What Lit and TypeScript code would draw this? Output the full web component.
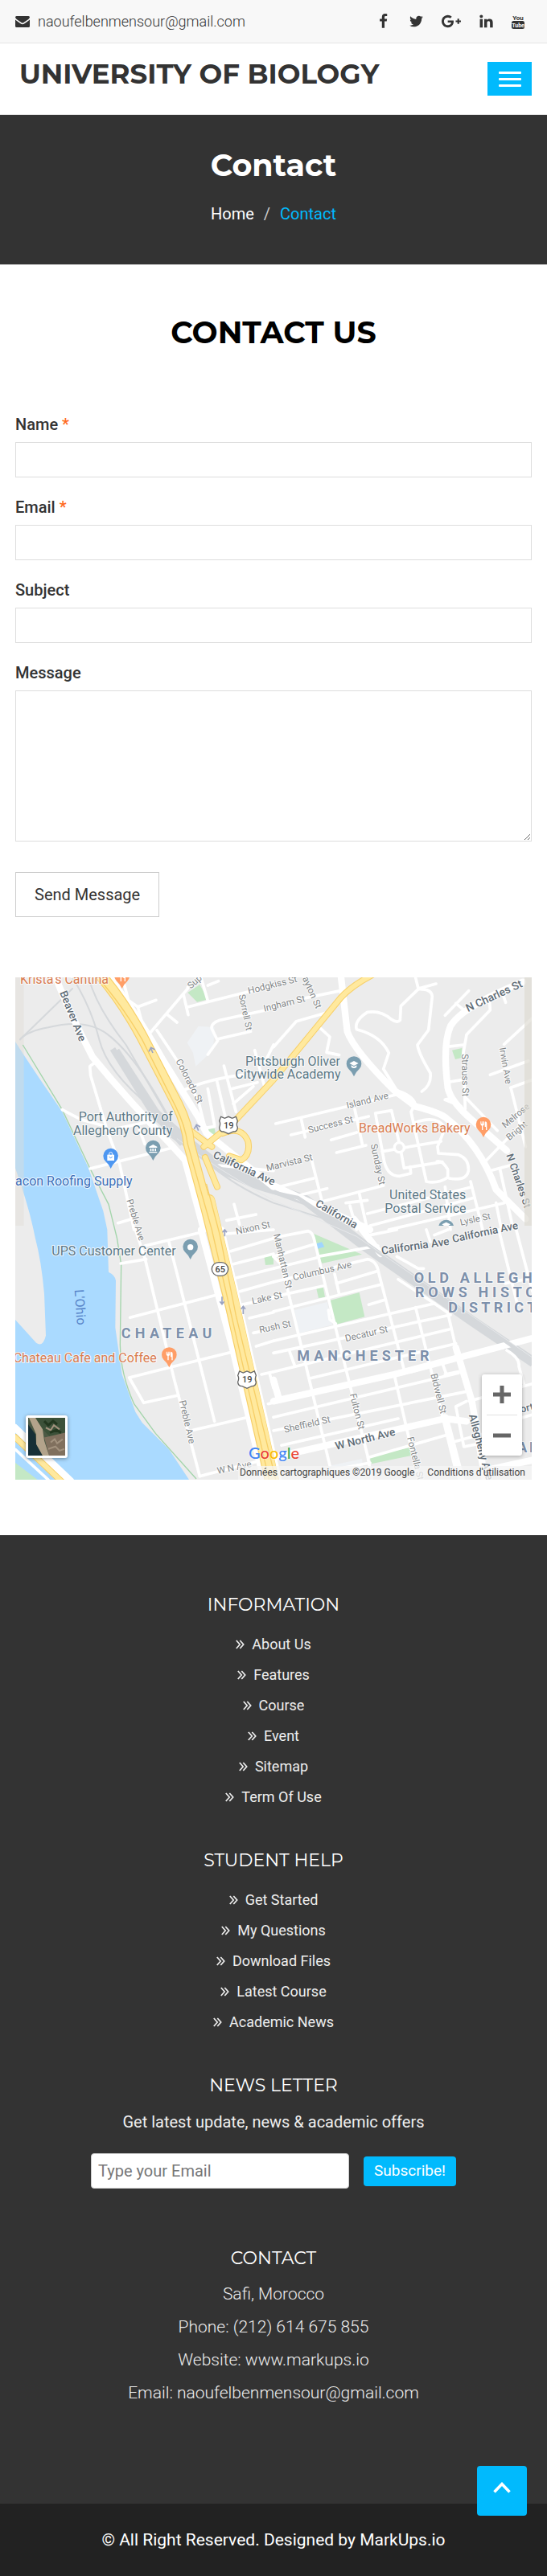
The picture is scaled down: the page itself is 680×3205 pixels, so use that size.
import { LitElement, html, svg, css } from "lit";
import { customElement } from "lit/decorators.js";

const SOCIAL = [
  { name: "Facebook", w: 19, box: "0 0 1792 1792", d: "M1343 12v264h-157q-86 0-116 36t-30 108v189h293l-39 296h-254v759h-306v-759h-255v-296h255v-218q0-186 104-288.5t277-102.5q147 0 228 12z" },
  { name: "Twitter", w: 19, box: "0 0 1792 1792", d: "M1684 408q-67 98-162 167 1 14 1 42 0 130-38 259.5t-115.5 248.5-184.5 210.5-258 146-323 54.5q-271 0-496-145 35 4 78 4 225 0 401-138-105-2-188-64.5t-114-159.5q33 5 61 5 43 0 85-11-112-23-185.5-111.5t-73.5-205.5v-4q68 38 146 41-66-44-105-115t-39-154q0-88 44-163 121 149 294.5 238.5t371.5 99.5q-8-38-8-74 0-134 94.5-228.5t228.5-94.5q140 0 236 102 109-21 205-78-37 115-142 178 93-10 186-50z" },
  { name: "Google Plus", w: 24, box: "-256 0 2304 1792", d: "M1181 913q0 208-87 370.5t-248 254-369 91.5q-149 0-285-58t-234-156-156-234-58-285 58-285 156-234 234-156 285-58q286 0 491 192l-199 191q-117-113-292-113-123 0-227.5 62t-165.5 168.5-61 232.5 61 232.5 165.5 168.5 227.5 62q83 0 152.5-23t114.5-57.5 78.5-78.5 49-83 21.5-74h-416v-252h692q12 63 12 122zm867-122v210h-209v209h-210v-209h-209v-210h209v-209h210v209h209z" },
  { name: "LinkedIn", w: 19, box: "0 0 1792 1792", d: "M477 625v991h-330v-991h330zm21-306q1 73-50.5 122t-135.5 49h-2q-82 0-132-49t-50-122q0-74 51.5-122.5t134.5-48.5 133 48.5 51 122.5zm1166 729v568h-329v-530q0-105-40.5-164.5t-126.5-59.5q-63 0-105.5 34.5t-63.5 85.5q-11 30-11 81v553h-329q2-399 2-647t-1-296l-1-48h329v144h-2q20-32 41-56t56.5-52 87-43.5 114.5-15.5q171 0 275 113.5t104 332.5z" },
];

const INFORMATION = ["About Us", "Features", "Course", "Event", "Sitemap", "Term Of Use"];
const STUDENT_HELP = ["Get Started", "My Questions", "Download Files", "Latest Course", "Academic News"];

/* ---- street map ---- */

// Each quarter of the map has its own origin; streets are grouped by width.
const QUARTERS = [
  {
    x: 0, y: 0,
    thin: [
      "M418 18 L452 85 L514 128 L542 235", "M514 128 L582 103", "M462 40 L478 100",
      "M700 55 L700 60 L560 225", "M625 158 L660 186", "M685 85 L702 158", "M702 128 L1020 48", "M750 20 L775 105", "M775 48 L815 32",
      "M775 306 L812 255 L790 210 Q785 190 820 178 L1020 134", "M812 248 L935 220", "M585 215 L655 320 L740 480 L765 580 L800 575",
      "M675 445 Q760 400 905 382", "M808 400 L845 560", "M775 434 L800 570", "M835 348 L880 520", "M860 435 L960 410", "M870 490 L945 425", "M950 290 L985 420",
      "M355 335 L335 350 L338 385 L400 590 L445 710 L500 960", "M232 512 L300 548 L380 570", "M336 732 L640 655", "M400 590 L560 556", "M520 585 L540 640",
      "M815 720 L1020 740", "M440 935 L490 920", "M845 925 L955 903", "M873 865 L893 940", "M990 330 L1020 270",
    ],
    wide: ["M208 18 Q250 130 345 315 Q480 480 645 650 L690 700 L760 960", "M410 18 Q520 170 610 330 L740 540 L770 600 L1020 800"],
  },
  {
    x: 1020, y: 0,
    thin: [
      "M120 95 L250 68", "M0 278 L85 182 L190 152", "M175 208 L210 240 L198 298 L245 308",
      "M530 20 L540 60 L606 42", "M540 62 L475 125 L472 178 Q462 190 440 175 Q400 140 350 148 Q300 180 310 212 Q400 235 430 300 L410 360 L460 440 Q520 460 528 490",
      "M540 62 Q590 60 592 90 L578 215 L537 270 Q540 300 585 375 Q590 420 553 444",
      "M8 564 L460 455", "M65 606 L355 537", "M103 545 L118 615", "M215 625 L310 597", "M235 672 L345 645", "M303 510 L332 645",
      "M20 800 L150 768", "M140 690 L180 850", "M100 830 L200 806", "M180 855 L410 795 L395 780",
      "M380 525 L440 515 L470 640 L487 730 L630 707 M380 525 L410 690 Q420 760 470 760 L512 750 L510 725 M405 668 L625 630 M528 490 L513 520 L570 780 Q610 790 650 765 L650 735 Q630 700 610 705 M528 560 Q610 530 640 580 L612 650 L615 675 L690 680 Q730 695 727 740 Q720 780 655 768",
      "M640 160 L728 68", "M680 115 L710 140", "M805 100 L808 140 L720 232 L708 300 L715 510", "M640 278 L708 270", "M658 408 L705 400", "M640 475 L662 468", "M640 475 L700 500", "M715 465 L835 590",
      "M865 80 L850 65 L866 112", "M966 170 L860 268", "M808 382 L950 330", "M885 430 L966 400", "M885 430 L940 650", "M790 705 L930 560", "M815 738 L890 718", "M845 735 L890 940",
      "M270 860 L350 850 M320 825 L350 960 M285 870 L310 960 M350 900 L740 800 M360 945 L750 840 M430 960 L860 860 M640 800 L660 960 M735 780 L780 960 M830 860 L850 960",
    ],
    wide: ["M252 18 L275 220 Q300 290 450 440 L530 500 Q610 520 640 540 Q770 640 830 810 L940 920", "M930 35 Q700 130 660 200 Q630 270 650 430 Q660 480 740 550 L870 665", "M0 795 L360 960"],
  },
  {
    x: 0, y: 960,
    thin: [
      "M505 0 L540 105 L650 560 L745 920", "M540 60 L750 10", "M450 126 L545 110", "M630 45 L800 715", "M485 328 L820 240", "M870 455 L640 512 L482 552 L536 646 L665 618",
      "M720 748 L925 700", "M745 920 L960 865", "M860 80 L1020 32", "M870 128 L1020 90", "M880 180 L1020 145", "M895 230 L1020 195", "M900 280 L1020 255", "M930 330 L1020 308",
      "M945 385 L1020 370", "M955 435 L1020 415", "M975 540 L1020 530", "M1000 650 L1020 645", "M1005 535 L1020 590", "M845 15 L1020 0",
    ],
    wide: ["M750 0 L870 455 L985 940", "M825 0 L1040 940"],
  },
  {
    x: 1020, y: 960,
    thin: [
      "M0 30 L130 5 Q145 10 150 30 L235 380 L350 840 L370 950", "M0 100 L150 55", "M0 145 L160 105", "M0 195 L350 110 Q385 115 392 160 L485 515", "M0 250 L185 210", "M0 305 L400 205", "M0 415 L600 275", "M0 460 L660 318",
      "M0 530 L655 372", "M135 555 L680 425", "M165 100 L390 60", "M235 200 L385 155", "M228 165 L245 240", "M355 280 L415 262",
      "M0 100 L30 130 L100 420 L210 880", "M60 455 L80 510", "M205 300 L210 335 L232 350", "M530 290 L680 900", "M450 540 L540 930", "M630 500 L645 540",
      "M0 700 L690 535", "M0 750 L715 605", "M30 805 L465 705", "M355 850 L650 765", "M465 185 L600 275 L650 310 L680 440", "M460 100 L540 145 L560 145",
      "M360 20 L460 0 M570 0 L585 45 M600 20 L650 0 M840 0 L910 280 M905 0 L966 230 M870 450 Q920 480 915 510 L935 580", "M720 640 L680 660 L710 810 L760 800", "M660 795 L790 760", "M730 640 L966 575", "M790 740 L966 690", "M640 540 L690 530",
      "M200 900 L360 870", "M865 200 L966 180",
    ],
    wide: ["M300 -40 L400 90 M0 640 L450 540 L700 475 L966 405", "M0 850 L220 800 L640 705 L720 715", "M0 560 L20 630", "M680 440 L740 640 L790 940", "M780 900 L966 860", "M640 700 L700 930"],
  },
];

const RAILS = [
  "M270 18 Q340 130 370 250 Q400 370 560 500 L700 640 Q830 780 1020 860 L1340 960",
  "M330 18 Q360 130 470 270 L650 580 L760 680 Q900 740 1100 830 L1420 1050",
  "M75 250 L270 60", "M75 250 Q100 220 180 205 Q320 170 400 230 Q520 320 660 600",
];

const YARD = ["M420 285 L560 510 L680 640", "M435 290 L590 530", "M560 510 Q700 640 840 740 Q1000 800 1140 850 L1360 1020 L1560 1160 L1760 1300 L1990 1455"];

// Labels: text, position, size, kind and rotation in degrees.
const LABELS: [string, number, number, number, string, number][] = [
  ["Krista's Cantina", 75, 42, 48, "food", 0],
  ["Beaver Ave", 222, 75, 40, "road", 68],
  ["Sup", 712, 62, 34, "street", -42],
  ["Hodgkiss St", 928, 80, 35, "street", -14],
  ["Ingham St", 986, 146, 35, "street", -14],
  ["Sorrell St", 890, 84, 34, "street", 78],
  ["Dayton St", 1118, 0, 35, "street", 66],
  ["Colorado St", 655, 330, 35, "street", 63],
  ["Port Authority of", 293, 556, 48, "place", 0],
  ["Allegheny County", 273, 606, 48, "place", 0],
  ["Beacon Roofing Supply", 2, 796, 48, "shop", 0],
  ["California Ave", 792, 690, 40, "road", 25],
  ["Preble Ave", 472, 850, 34, "street", 73],
  ["Pittsburgh Oliver", 915, 348, 48, "place", 0],
  ["Citywide Academy", 877, 396, 48, "place", 0],
  ["N Charles St", 1745, 148, 41, "road", -25],
  ["Irwin Ave", 1862, 282, 34, "street", 80],
  ["Strauss St", 1722, 304, 35, "street", 89],
  ["Island Ave", 1295, 508, 35, "street", -14],
  ["Success St", 1152, 600, 35, "street", -14],
  ["BreadWorks Bakery", 1338, 598, 48, "food", 0],
  ["Sunday St", 1382, 642, 35, "street", 78],
  ["Marvista St", 996, 742, 35, "street", -14],
  ["Melrose", 1884, 582, 34, "street", -40],
  ["Bright", 1900, 628, 34, "street", -40],
  ["N Charles St", 1888, 682, 38, "road", 71],
  ["United States", 1452, 846, 48, "place", 0],
  ["Postal Service", 1435, 896, 48, "place", 0],
  ["California", 1174, 870, 40, "road", 30],
  ["Lysle St", 1718, 944, 34, "street", -12],
  ["Nixon St", 882, 978, 35, "street", -12],
  ["UPS Customer Center", 193, 1056, 48, "place", 0],
  ["L'Ohio", 278, 1184, 48, "water", 86],
  ["Lake St", 942, 1238, 35, "street", -12],
  ["Rush St", 970, 1346, 35, "street", -12],
  ["Chateau Cafe and Coffee", 50, 1456, 48, "food", 0],
  ["Preble Ave", 668, 1600, 35, "street", 77],
  ["W N Ave", 812, 1872, 35, "street", -12],
  ["Manhattan St", 1020, 978, 35, "street", 77],
  ["California Ave", 1424, 1052, 41, "road", -8],
  ["California Ave", 1690, 1008, 40, "road", -12],
  ["Columbus Ave", 1095, 1150, 35, "street", -13],
  ["Decatur St", 1290, 1378, 35, "street", -13],
  ["Bidwell St", 1606, 1500, 35, "street", 76],
  ["Fulton St", 1304, 1574, 35, "street", 76],
  ["Fontella St", 1518, 1736, 35, "street", 76],
  ["Sheffield St", 1062, 1718, 35, "street", -13],
  ["W North Ave", 1254, 1782, 41, "road", -14],
  ["Allegheny Ave", 1748, 1652, 40, "road", 75],
  ["North", 1918, 1650, 38, "road", -14],
];

const DISTRICTS: [string, number, number, number][] = [
  ["CHATEAU", 452, 1364, 16],
  ["MANCHESTER", 1108, 1448, 15],
  ["OLD ALLEGHENY", 1544, 1157, 14],
  ["ROWS HISTORIC", 1548, 1213, 14],
  ["DISTRICT", 1672, 1270, 13],
  ["ALLEGHENY", 1930, 1792, 8],
];

const PINS: [number, number, string, string][] = [
  [455, 60, "#ff9e67", "food"],
  [413, 732, "#4e97f1", "bag"],
  [571, 702, "#7b9eb0", "civic"],
  [1320, 388, "#7b9eb0", "school"],
  [1803, 615, "#ff9e67", "food"],
  [710, 1071, "#7b9eb0", "dot"],
  [631, 1474, "#ff9e67", "food"],
];

const GLYPHS: Record<string, unknown> = {
  food: svg`<path d="M-11 -59v9q0 6 5 7v16h4v-16q5-1 5-7v-9h-3v8h-2v-8h-3v8h-3v-8zM7 -59q6 0 6 8v24h-4v-12h-4v-12q0-6 2-8z" fill="#fff"/>`,
  bag: svg`<path d="M-13 -52h26v22h-26z" fill="#fff"/><path d="M-6 -50v-5a6 6 0 0 1 12 0v5" fill="none" stroke="#fff" stroke-width="3"/><path d="M-6 -44q6 8 12 0" fill="none" stroke="#4e97f1" stroke-width="3"/>`,
  civic: svg`<path d="M-15 -52L0 -60 15 -52v4h-30zM-11 -45h5v10h-5zM-3 -45h5v10h-5zM6 -45h5v10h-5zM-15 -33h30v4h-30z" fill="#fff"/>`,
  school: svg`<path d="M-17 -49L0 -58 17 -49 0 -40zM-10 -42v7q10 8 20 0v-7l-10 6z" fill="#fff"/>`,
  dot: svg`<circle cy="-46" r="11" fill="#fff"/>`,
};

@customElement("street-map")
export class StreetMap extends LitElement {
  static styles = css`
    :host { display: block; position: relative; height: 625px; overflow: hidden; background: #ececec; font-family: Roboto, sans-serif; }
    .canvas { display: block; width: 100%; height: 100%; }
    .thin, .wide, .rail, .yard, .hwy-edge, .hwy, .hwy-line { fill: none; stroke-linejoin: round; stroke-linecap: round; }
    .thin { stroke: #fff; stroke-width: 11; }
    .wide { stroke: #fff; stroke-width: 25; }
    .rail { stroke: #d5d8db; stroke-width: 6; }
    .yard { stroke: #d5d8db; stroke-width: 22; stroke-linecap: butt; }
    .yard-main { stroke-width: 38; }
    .hwy-edge { stroke: #f7cf68; stroke-width: 44; }
    .hwy { stroke: #ffe99e; stroke-width: 37; }
    .hwy-line { stroke: #f7cf68; stroke-width: 4; }
    .slim-edge { stroke-width: 24; }
    .slim { stroke-width: 18; }
    text { paint-order: stroke; stroke: #fff; stroke-width: 6px; stroke-opacity: 0.8; stroke-linejoin: round; font-family: Roboto, sans-serif; }
    .place { fill: #5c7886; }
    .food { fill: #d97c50; }
    .shop { fill: #3d6fb8; }
    .water { fill: #5683c8; stroke: none; }
    .road { fill: #5f6c76; font-weight: 500; }
    .street { fill: #828688; }
    .district { fill: #7d90ab; font-weight: 700; font-size: 54px; }
    .shield { fill: #444; stroke: none; font-size: 33px; font-weight: 500; text-anchor: middle; }
    .thumb { position: absolute; left: 13px; bottom: 27px; width: 52px; height: 53px; padding: 3px; box-sizing: border-box; border: 0; border-radius: 3px; background: #fff; box-shadow: 0 1px 5px rgba(0, 0, 0, 0.4); }
    .thumb svg { display: block; width: 100%; height: 100%; }
    .zoom { position: absolute; right: 12px; bottom: 30px; width: 50px; display: flex; flex-direction: column; background: #fff; border-radius: 3px; box-shadow: 0 1px 5px rgba(0, 0, 0, 0.3); }
    .zoom button { display: grid; place-items: center; height: 50px; padding: 0; border: 0; background: none; }
    .zoom hr { width: 38px; height: 1px; margin: 0 auto; border: 0; background: #e2e2e2; }
    .logo { position: absolute; left: 290px; bottom: 20px; font: 500 20px/28px Lato, sans-serif; color: #4285f4; text-decoration: none; text-shadow: 0 0 2px #fff; }
    .r { color: #ea4335; }
    .y { color: #fbbc05; }
    .g { color: #34a853; }
    .legal { position: absolute; right: 0; bottom: 0; display: flex; gap: 16px; padding: 0 8px 0 2px; background: rgba(245, 245, 245, 0.75); font-size: 12px; line-height: 17px; color: #444; white-space: nowrap; }
    .legal a { color: inherit; text-decoration: none; }
  `;

  render() {
    return html`
      <svg class="canvas" viewBox="57 18 1926 1875" preserveAspectRatio="xMidYMid slice" role="img" aria-label="Map">
        <rect x="0" y="0" width="2100" height="2000" fill="#ececec" />
        <path d="M57 258L90 310 150 400 232 520 330 730 385 890 400 960 405 1118Q430 1130 432 1150L430 1325 455 1500 505 1640 530 1680 630 1780 705 1893H57z" fill="#aadaff" />
        <path d="M57 730Q110 880 130 985 155 1080 165 1200L171 1355Q160 1400 135 1382L57 1296z" fill="#ececec" />
        <rect x="57" y="18" width="32" height="927" fill="#e0ddd5" opacity=".4" />
        <path d="M85 270L232 512 336 732 405 865 436 990 452 1090 448 1390Q450 1500 500 1610L580 1720 732 1890" fill="none" stroke="#a3d5ab" stroke-width="4" />
        <path d="M700 75L745 45 775 100 735 110zM762 590L800 580 805 608 770 605zM1686 290L1723 282 1722 318 1698 324zM985 1060L1020 1055V1090L990 1092zM1170 975L1350 1052 1200 1086zM1180 1180L1205 1173 1212 1212 1188 1215zM1228 1225L1340 1194 1360 1285 1253 1314zM1378 1805L1535 1772 1540 1802 1385 1834zM57 1830L140 1893H57z" fill="#c4e8c5" />
        <path d="M740 200L800 205 795 290 730 350 720 300 698 262zM1098 1260L1220 1230 1240 1315 1115 1346zM1235 1840L1350 1815 1360 1893H1240z" fill="#eff2f5" />
        <path d="M1180 1012l20-6 10 18-28 8z" fill="#9fd5ff" />
        ${RAILS.map((d) => svg`<path class="rail" d=${d} />`)}
        ${YARD.map((d, i) => svg`<path class=${i === 2 ? "yard yard-main" : "yard"} d=${d} />`)}
        ${QUARTERS.map((q) => svg`<g transform=${`translate(${q.x} ${q.y})`}>
          ${q.thin.map((d) => svg`<path class="thin" d=${d} />`)}
          ${q.wide.map((d) => svg`<path class="wide" d=${d} />`)}
        </g>`)}
        <path d="M640 610Q760 690 850 750T1110 840L1350 1000 1990 1450" fill="none" stroke="#d5d8db" stroke-width="14" />
        <path d="M660 620Q800 730 1020 850L1330 985 1990 1440" fill="none" stroke="#e6e8ea" stroke-width="3" />
        <circle cx="1489" cy="653" r="18" fill="#ececec" stroke="#fff" stroke-width="10" />
        <path class="thin" d="M57 1690L270 1893M57 1780L180 1893" />
        <path class="wide" d="M57 1700L250 1893" />
        <path class="hwy-edge slim-edge" d="M57 1735L230 1900" />
        <path class="hwy slim" d="M57 1735L230 1900" />
        <path class="hwy-edge slim-edge" d="M760 650L870 560 1020 400 1270 95Q1310 50 1390 8" />
        <path class="hwy-edge slim-edge" d="M830 600Q900 570 925 630 935 680 900 700L855 685M710 590L790 650M765 690L810 800" />
        <path class="hwy slim" d="M760 650L870 560 1020 400 1270 95Q1310 50 1390 8" />
        <path class="hwy slim" d="M830 600Q900 570 925 630 935 680 900 700L855 685M710 590L790 650M765 690L810 800" />
        <path class="hwy-edge" d="M375 10Q460 110 530 240L660 490Q700 570 705 640L770 880 860 1240 1010 1900" />
        <path class="hwy-edge" d="M780 850L870 1230 1020 1900" />
        <path class="hwy" d="M375 10Q460 110 530 240L660 490Q700 570 705 640L770 880 860 1240 1010 1900" />
        <path class="hwy" d="M782 850L872 1230 1022 1900" />
        <path class="hwy-line" d="M375 30Q460 130 530 250L655 500Q690 570 700 640L790 960 1005 1900" />
        <path class="hwy-line" d="M770 790L820 980 880 1280 1030 1900" />
        ${LABELS.map(([t, x, y, size, kind, turn]) => svg`<text class=${kind} x=${x} y=${y} font-size=${size} transform=${`rotate(${turn} ${x} ${y})`}>${t}</text>`)}
        ${DISTRICTS.map(([t, x, y, gap]) => svg`<text class="district" x=${x} y=${y} letter-spacing=${gap}>${t}</text>`)}
        <path d="M824 538l14 6 14-6 14 6 14-6 6 16q-6 14 0 24 0 16-16 16l-18 8-18-8q-16 0-16-16 6-14 0-24z" fill="#fff" stroke="#666" stroke-width="4" />
        <text class="shield" x="853" y="582">19</text>
        <path d="M893 1488l14 6 14-6 14 6 14-6 6 16q-6 14 0 24 0 16-16 16l-18 8-18-8q-16 0-16-16 6-14 0-24z" fill="#fff" stroke="#666" stroke-width="4" />
        <text class="shield" x="922" y="1531">19</text>
        <rect x="790" y="1082" width="61" height="50" rx="25" fill="#fff" stroke="#666" stroke-width="4" />
        <text class="shield" x="821" y="1119">65</text>
        <path d="M570 300L562 282M555 295L563 280 578 288M740 590L732 570M724 584L733 568 747 576M828 1210V1236M820 1228l8 10 8-10M907 1275V1248M899 1256l8-10 8 10M838 985V962M830 970l8-10 8 10" fill="none" stroke="#9aa3c2" stroke-width="5" />
        ${PINS.map(([x, y, color, kind]) => svg`<g transform=${`translate(${x} ${y})`}>
          <path d="M0 0Q-6 -16 -20 -28A28 28 0 1 1 20 -28Q6 -16 0 0z" fill=${color} />
          ${GLYPHS[kind]}
        </g>`)}
        <path d="M1636 945A29 29 0 0 1 1692 945z" fill="#7b9eb0" />
        <path d="M1648 940L1664 932 1680 940 1672 945H1656z" fill="#fff" />
        <rect x="1956" y="18" width="30" height="927" fill="#dedcd3" opacity=".7" />
      </svg>
      <button class="thumb" aria-label="Satellite view">
        <svg viewBox="0 0 46 46" preserveAspectRatio="none">
          <rect width="46" height="46" fill="#4c5a45" />
          <path d="M0 8L9 20 10 32 18 46H0z" fill="#172f36" />
          <path d="M6 0H46V20L30 26 18 14z" fill="#3c5139" />
          <path d="M20 24L46 18V46H26z" fill="#80705e" />
          <path d="M1 0H9L18 14 20 28 26 46H18L10 32 10 20z" fill="#b3a38b" />
          <path d="M28 30l5-4 3 5 7-5M25 38l9-3 5 5 6-2M22 12l6 3 4-6 7 5" fill="none" stroke="#a2927e" stroke-width="2" />
          <path d="M20 4l5 5 6-5 5 4M27 18l8-3 6 3" fill="none" stroke="#22371f" stroke-width="3" />
        </svg>
      </button>
      <div class="zoom">
        <button aria-label="Zoom in"><svg width="22" height="22" viewBox="0 0 22 22"><path d="M0 11h22M11 0v22" stroke="#666" stroke-width="5" /></svg></button>
        <hr />
        <button aria-label="Zoom out"><svg width="22" height="22" viewBox="0 0 22 22"><path d="M0 11h22" stroke="#666" stroke-width="5" /></svg></button>
      </div>
      <a class="logo" href="#map">G<span class="r">o</span><span class="y">o</span>g<span class="g">l</span><span class="r">e</span></a>
      <div class="legal"><span>Données cartographiques ©2019 Google</span><a href="#terms">Conditions d'utilisation</a></div>
    `;
  }
}

@customElement("app-root")
export class AppRoot extends LitElement {
  static styles = css`
    :host { display: block; background: #fff; color: #333; font-family: Roboto, sans-serif; font-size: 18px; line-height: 26px; }
    a { color: inherit; text-decoration: none; }
    h1, h2, h3, p, ul { margin: 0; padding: 0; font-weight: 400; }
    ul { list-style: none; }
    button, input, textarea { font: inherit; box-sizing: border-box; }
    .title { font-family: Montserrat, Inter, sans-serif; }

    .topbar { display: flex; justify-content: space-between; align-items: center; height: 53px; padding: 0 28px 0 19px; background: #f8f8f8; border-bottom: 1px solid #e5e5e5; }
    .mail { display: flex; align-items: center; gap: 10px; font-weight: 300; }
    .social { display: flex; align-items: center; gap: 22px; }
    .social a, .social svg { display: block; }
    .social svg { fill: #333; }
    .social text { font-family: "Liberation Sans Narrow", Roboto, sans-serif; font-weight: 700; text-anchor: middle; }

    .header { display: flex; justify-content: space-between; align-items: flex-start; padding: 23px 19px; border-bottom: 1px solid #e5e5e5; }
    .brand { padding: 0 5px; font-size: 34px; line-height: 30px; font-weight: 700; }
    .menu { display: grid; align-content: center; justify-items: center; gap: 5px; width: 55px; height: 42px; padding: 0; border: 0; background: #01bafd; }
    .bar { width: 28px; height: 3px; border-radius: 1px; background: #fff; }

    .banner { padding: 38px 19px 50px; background: #333; color: #fff; text-align: center; }
    .banner h1 { font-size: 38px; line-height: 50px; font-weight: 700; }
    .crumbs { display: flex; justify-content: center; gap: 12px; margin-top: 22px; font-size: 20px; }
    .sep { color: #ccc; }
    .here { color: #01bafd; }

    .main { padding: 60px 19px 69px; }
    .main h2 { color: #000; text-align: center; font-size: 38px; line-height: 50px; font-weight: 700; }
    .form { display: grid; gap: 23px; margin-top: 75px; }
    .field { display: grid; gap: 7px; }
    .field label { font-size: 20px; font-weight: 500; line-height: 29px; }
    .req { color: #ff6a22; }
    .field input, .field textarea { display: block; width: 100%; height: 44px; padding: 6px 12px; border: 1px solid #ddd; border-radius: 0; background: #fff; }
    .field textarea { height: 188px; }
    .send { justify-self: start; height: 56px; margin: 15px 0 75px; padding: 0 23px; border: 1px solid #ccc; background: #fff; color: #333; font-size: 20px; }

    .footer { padding: 70px 19px 125px; background: #333; color: #eee; text-align: center; }
    .footer h3 { color: #fff; font-size: 22px; line-height: 34px; }
    .links { display: grid; gap: 12px; justify-items: center; margin: 19px 0 49px; }
    .links a { display: flex; align-items: center; gap: 9px; }
    .lead { margin: 15px 0 26px; font-size: 20px; }
    .subscribe { display: flex; justify-content: center; align-items: center; gap: 18px; margin-bottom: 70px; }
    .subscribe input { width: 321px; height: 44px; padding: 0 8px; border: 1px solid #ccc; border-radius: 4px; background: #fff; color: #333; font-size: 20px; }
    .subscribe input::placeholder { color: #777; opacity: 1; }
    .subscribe button { height: 37px; padding: 0 13px; border: 0; border-radius: 4px; background: #01bafd; color: #fff; font-size: 19px; }
    .address { display: grid; gap: 15px; margin-top: 14px; font-size: 21px; font-style: normal; }
    .address p { font-weight: 300; }

    .bottom { position: relative; padding: 32px 19px; background: #222; color: #fff; text-align: center; font-size: 21px; }
    .totop { position: absolute; right: 25px; top: -47px; display: grid; place-items: center; width: 62px; height: 62px; padding-bottom: 8px; box-sizing: border-box; border-radius: 4px; background: #01bafd; }
  `;

  private links(items: string[]) {
    return html`<ul class="links">
      ${items.map((item) => html`<li><a href="#">
        <svg width="11" height="12" viewBox="0 0 11 12" fill="none" stroke="#eee" stroke-width="1.7"><path d="M.8 1l4.400 5-4.400 5M5.300 1l4.400 5-4.400 5" /></svg>${item}</a></li>`)}
    </ul>`;
  }

  private field(id: string, label: string, required = false) {
    return html`<div class="field">
      <label for=${id}>${label}${required ? html` <span class="req">*</span>` : ""}</label>
      <input id=${id} type=${id === "email" ? "email" : "text"} ?required=${required} />
    </div>`;
  }

  render() {
    return html`
      <div class="topbar">
        <a class="mail" href="mailto:naoufelbenmensour@gmail.com">
          <svg width="18" height="14" viewBox="0 0 18 14" fill="#333"><path d="M0 1.500Q0 0 1.500 0h15Q18 0 18 1.500 17.500 3 16 4.200L10.500 8Q9 9 7.500 8L2 4.200Q.5 3 0 1.500zM0 4.500Q3 7 6.500 9.300 9 11 11.500 9.300 15 7 18 4.500V12.500Q18 14 16.500 14h-15Q0 14 0 12.500z" /></svg>
          naoufelbenmensour@gmail.com
        </a>
        <nav class="social" aria-label="Social">
          ${SOCIAL.map((s) => html`<a href="#" aria-label=${s.name}><svg width=${s.w} height="19" viewBox=${s.box}><path d=${s.d} /></svg></a>`)}
          <a href="#" aria-label="YouTube"><svg width="16" height="20" viewBox="0 0 16 20">
            <text x="8" y="8" font-size="8">You</text>
            <rect y="9" width="16" height="10" rx="2.500" />
            <text x="8" y="17" font-size="7" fill="#fff">Tube</text>
          </svg></a>
        </nav>
      </div>
      <header class="header">
        <a class="brand title" href="#">UNIVERSITY OF BIOLOGY</a>
        <button class="menu" aria-label="Toggle navigation"><span class="bar"></span><span class="bar"></span><span class="bar"></span></button>
      </header>
      <section class="banner">
        <h1 class="title">Contact</h1>
        <nav class="crumbs" aria-label="Breadcrumb"><a href="#">Home</a><span class="sep">/</span><span class="here">Contact</span></nav>
      </section>
      <main class="main">
        <h2 class="title">CONTACT US</h2>
        <form class="form">
          ${this.field("name", "Name", true)} ${this.field("email", "Email", true)} ${this.field("subject", "Subject")}
          <div class="field"><label for="message">Message</label><textarea id="message"></textarea></div>
          <button class="send" type="button">Send Message</button>
        </form>
        <street-map></street-map>
      </main>
      <footer class="footer">
        <h3 class="title">INFORMATION</h3>
        ${this.links(INFORMATION)}
        <h3 class="title">STUDENT HELP</h3>
        ${this.links(STUDENT_HELP)}
        <h3 class="title">NEWS LETTER</h3>
        <p class="lead">Get latest update, news &amp; academic offers</p>
        <form class="subscribe">
          <input type="email" placeholder="Type your Email" aria-label="Type your Email" />
          <button type="button">Subscribe!</button>
        </form>
        <h3 class="title">CONTACT</h3>
        <address class="address">
          <p>Safi, Morocco</p>
          <p>Phone: (212) 614 675 855</p>
          <p>Website: www.markups.io</p>
          <p>Email: naoufelbenmensour@gmail.com</p>
        </address>
      </footer>
      <div class="bottom">
        <p>© All Right Reserved. Designed by MarkUps.io</p>
        <a class="totop" href="#" aria-label="Back to top"><svg width="22" height="14" viewBox="0 0 22 14" fill="none" stroke="#fff" stroke-width="3.500"><path d="M1.500 12.500L11 2.500l9.500 10" /></svg></a>
      </div>
    `;
  }
}
